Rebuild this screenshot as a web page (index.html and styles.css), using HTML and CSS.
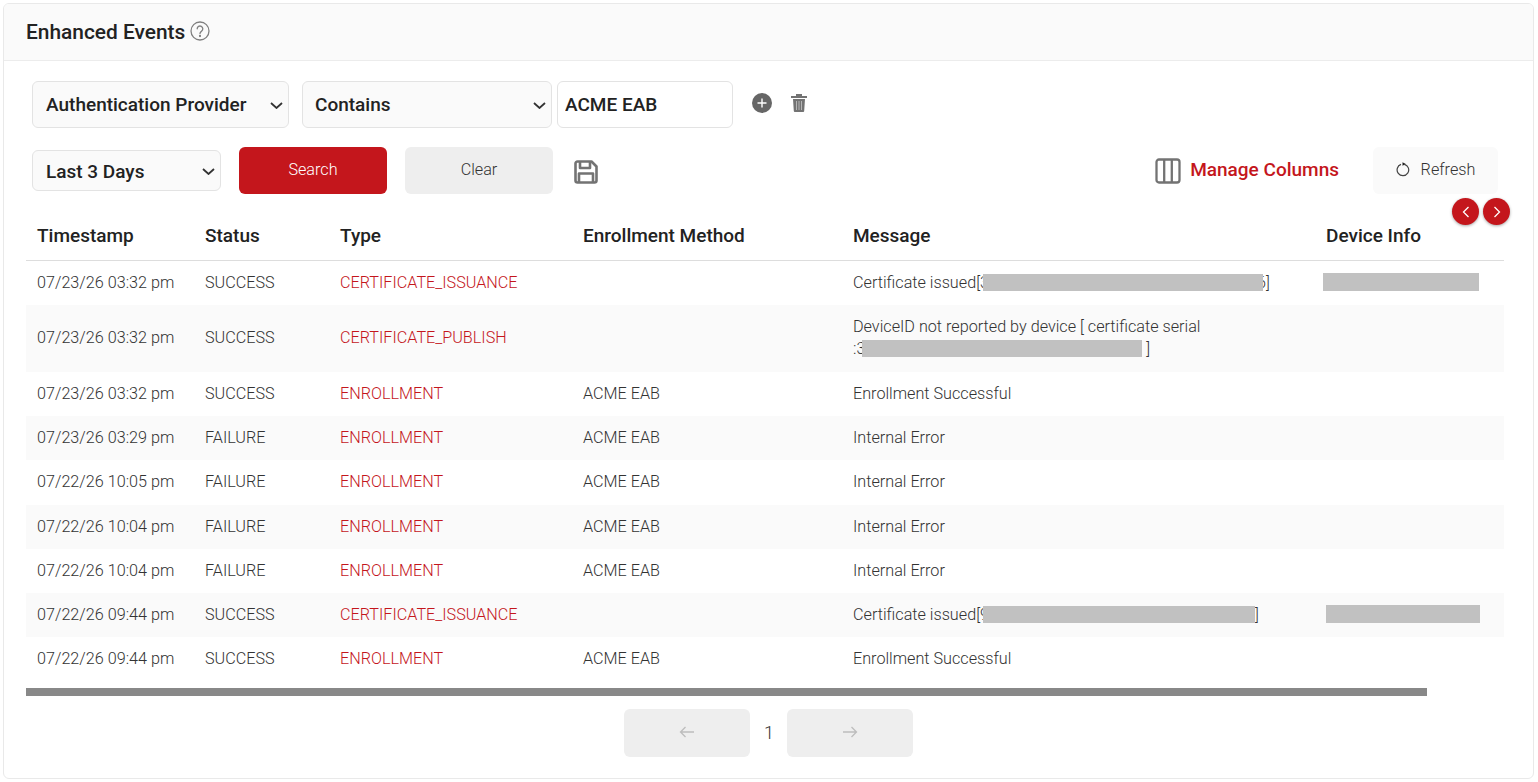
FILE: index.html

```html
<!DOCTYPE html>
<html lang="en">
<head>
    <meta charset="UTF-8">
    <meta name="viewport" content="width=device-width, initial-scale=1.0">
    <title>Enhanced Events</title>
    <link rel="stylesheet" href="styles.css">
</head>
<body>
    <div class="card">
        <div class="card-header">
            <h1 class="card-title">Enhanced Events</h1>
            <svg class="help-icon" viewBox="0 0 20 20" fill="none" stroke="#808080" stroke-width="1.3" stroke-linecap="round">
                <circle cx="10" cy="10" r="9"/>
                <path d="M7.2 7.8a2.8 2.8 0 1 1 4.4 2.3c-1 .7-1.6 1.2-1.6 2.4"/>
                <circle cx="10" cy="15" r=".5" fill="#808080"/>
            </svg>
        </div>

        <div class="card-body">
            <div class="filter-row">
                <div class="select-wrap wrap-provider">
                    <select class="field"><option>Authentication Provider</option></select>
                    <svg class="chevron" viewBox="0 0 13 7" fill="none" stroke="#333" stroke-width="1.800"><path d="M1 1l5.500 5L12 1"/></svg>
                </div>
                <div class="select-wrap wrap-operator">
                    <select class="field"><option>Contains</option></select>
                    <svg class="chevron" viewBox="0 0 13 7" fill="none" stroke="#333" stroke-width="1.800"><path d="M1 1l5.500 5L12 1"/></svg>
                </div>
                <input class="field field-value" type="text" value="ACME EAB">
                <svg class="icon-add" viewBox="0 0 20 20">
                    <circle cx="10" cy="10" r="10" fill="#666"/>
                    <path d="M10 5.5v9M5.5 10h9" stroke="#fff" stroke-width="1.4"/>
                </svg>
                <svg class="icon-trash" viewBox="0 0 16 18">
                    <path d="M5 0h6v2h5v2H0V2h5z" fill="#737373"/>
                    <path d="M2 5h12l-.8 12a1 1 0 0 1-1 1H3.800a1 1 0 0 1-1-1z" fill="#737373"/>
                    <path d="M5.500 7v9M8 7v9M10.500 7v9" stroke="#b5b5b5" stroke-width="1"/>
                </svg>
            </div>

            <div class="action-row">
                <div class="select-wrap wrap-range">
                    <select class="field"><option>Last 3 Days</option></select>
                    <svg class="chevron" viewBox="0 0 13 7" fill="none" stroke="#333" stroke-width="1.800"><path d="M1 1l5.500 5L12 1"/></svg>
                </div>
                <button class="btn btn-search">Search</button>
                <button class="btn btn-clear">Clear</button>
                <svg class="icon-save" viewBox="0 0 26 26" fill="none" stroke="#737373" stroke-width="2.6" stroke-linejoin="round">
                    <path d="M2.500 4.500a2 2 0 0 1 2-2h14l5 5v14a2 2 0 0 1-2 2h-17a2 2 0 0 1-2-2z"/>
                    <path d="M7 2.500v6.500h10V2.500M6 23.500v-9h14v9"/>
                </svg>
                <div class="action-right">
                    <svg class="icon-columns" viewBox="0 0 26 26" fill="none" stroke="#737373" stroke-width="2.300">
                        <rect x="1.500" y="1.500" width="23" height="23" rx="2.500"/>
                        <path d="M9.200 1.500v23M16.800 1.500v23"/>
                    </svg>
                    <span class="manage-link">Manage Columns</span>
                    <button class="btn btn-refresh">
                        <svg class="icon-refresh" viewBox="0 0 14 15" fill="none" stroke="#444" stroke-width="1.200">
                            <path d="M5 2.400a5.800 5.800 0 1 0 3.500 -.1"/>
                            <path d="M6.500 .2L9.800 2 6.500 3.800z" fill="#222" stroke="none"/>
                        </svg>
                        Refresh
                    </button>
                </div>
            </div>

            <div class="table-area">
                <div class="scroll-btns">
                    <button class="round-btn">
                        <svg viewBox="0 0 10 14" fill="none" stroke="#fff" stroke-width="1.300"><path d="M7.500 2L2.500 7l5 5"/></svg>
                    </button>
                    <button class="round-btn">
                        <svg viewBox="0 0 10 14" fill="none" stroke="#fff" stroke-width="1.300"><path d="M2.500 2l5 5-5 5"/></svg>
                    </button>
                </div>
                <div class="table-scroll">
                    <table class="events">
                        <colgroup>
                            <col class="col-time"><col class="col-status"><col class="col-type">
                            <col class="col-method"><col class="col-message"><col class="col-device">
                        </colgroup>
                        <thead>
                            <tr><th>Timestamp</th><th>Status</th><th>Type</th><th>Enrollment Method</th><th>Message</th><th>Device Info</th></tr>
                        </thead>
                        <tbody>
                            <tr>
                                <td>07/23/26 03:32 pm</td><td>SUCCESS</td><td class="type">CERTIFICATE_ISSUANCE</td><td></td>
                                <td>Certificate issued[3<span class="redact redact-a"></span>6]</td>
                                <td><span class="redact redact-dev1"></span></td>
                            </tr>
                            <tr class="tall">
                                <td>07/23/26 03:32 pm</td><td>SUCCESS</td><td class="type">CERTIFICATE_PUBLISH</td><td></td>
                                <td>DeviceID not reported by device [ certificate serial<br>:3<span class="redact redact-b"></span> ]</td>
                                <td></td>
                            </tr>
                            <tr>
                                <td>07/23/26 03:32 pm</td><td>SUCCESS</td><td class="type">ENROLLMENT</td><td>ACME EAB</td>
                                <td>Enrollment Successful</td><td></td>
                            </tr>
                            <tr>
                                <td>07/23/26 03:29 pm</td><td>FAILURE</td><td class="type">ENROLLMENT</td><td>ACME EAB</td>
                                <td>Internal Error</td><td></td>
                            </tr>
                            <tr>
                                <td>07/22/26 10:05 pm</td><td>FAILURE</td><td class="type">ENROLLMENT</td><td>ACME EAB</td>
                                <td>Internal Error</td><td></td>
                            </tr>
                            <tr>
                                <td>07/22/26 10:04 pm</td><td>FAILURE</td><td class="type">ENROLLMENT</td><td>ACME EAB</td>
                                <td>Internal Error</td><td></td>
                            </tr>
                            <tr>
                                <td>07/22/26 10:04 pm</td><td>FAILURE</td><td class="type">ENROLLMENT</td><td>ACME EAB</td>
                                <td>Internal Error</td><td></td>
                            </tr>
                            <tr>
                                <td>07/22/26 09:44 pm</td><td>SUCCESS</td><td class="type">CERTIFICATE_ISSUANCE</td><td></td>
                                <td>Certificate issued[9<span class="redact redact-c"></span>]</td>
                                <td><span class="redact redact-dev2"></span></td>
                            </tr>
                            <tr>
                                <td>07/22/26 09:44 pm</td><td>SUCCESS</td><td class="type">ENROLLMENT</td><td>ACME EAB</td>
                                <td>Enrollment Successful</td><td></td>
                            </tr>
                        </tbody>
                    </table>
                </div>
                <div class="scroll-track"><div class="scroll-thumb"></div></div>
            </div>

            <div class="pager">
                <button class="btn btn-page">
                    <svg viewBox="0 0 16 12" fill="none" stroke="#bdbdbd" stroke-width="1.300"><path d="M15 6H1.500M6.500 1l-5 5 5 5"/></svg>
                </button>
                <span class="page-num">1</span>
                <button class="btn btn-page">
                    <svg viewBox="0 0 16 12" fill="none" stroke="#bdbdbd" stroke-width="1.300"><path d="M1 6h13.500M9.500 1l5 5-5 5"/></svg>
                </button>
            </div>
        </div>
    </div>
</body>
</html>
```

FILE: styles.css

```css
* {
    box-sizing: border-box;
}
body {
    margin: 0;
    background-color: #fff;
    font-family: Roboto, "Liberation Sans", sans-serif;
    font-weight: 300;
    font-size: 16.2px;
    color: #333;
    overflow: hidden;
}
button {
    font-family: inherit;
    cursor: pointer;
}

.card {
    margin: 3px 4px 0 3px;
    height: 776px;
    border: 1px solid #e9e9e9;
    border-radius: 6px;
    overflow: hidden;
}
.card-header {
    display: flex;
    align-items: center;
    gap: 5px;
    height: 57px;
    padding: 0 22px;
    background-color: #fafafa;
    border-bottom: 1px solid #ececec;
}
.card-title {
    margin: 0;
    font-size: 20.900px;
    font-weight: 500;
    color: #222;
}
.help-icon {
    width: 20px;
    height: 20px;
    margin-top: -3px;
}
.card-body {
    padding: 20px 29px 0 22px;
}

.filter-row {
    display: flex;
    align-items: center;
    padding-left: 6px;
    height: 47px;
}
.action-row {
    display: flex;
    align-items: center;
    padding-left: 6px;
    margin-top: 19px;
    height: 47px;
}
.field {
    font-family: inherit;
    font-size: 19px;
    font-weight: 500;
    color: #222;
    background-color: #fafafa;
    border: 1px solid #e3e3e3;
    border-radius: 6px;
    padding: 0 12px;
}
.select-wrap {
    position: relative;
    height: 47px;
}
.select-wrap select {
    appearance: none;
    width: 100%;
    height: 100%;
}
.chevron {
    position: absolute;
    top: 50%;
    right: 6px;
    width: 13px;
    height: 7px;
    margin-top: -3px;
    pointer-events: none;
}
.wrap-provider { width: 257px; }
.wrap-provider select { padding-left: 13px; }
.wrap-operator { width: 250px; margin-left: 13px; }
.wrap-range { width: 189px; height: 41px; }
.wrap-range select { padding: 2px 0 0 13px; }
.field-value {
    width: 176px;
    height: 47px;
    margin-left: 5px;
    padding: 0 7px;
    background-color: #fff;
}

.icon-add {
    width: 20px;
    height: 20px;
    margin-left: 19px;
    margin-bottom: 3px;
}
.icon-trash {
    width: 16px;
    height: 18px;
    margin-left: 19px;
    margin-bottom: 4px;
}
.icon-save {
    width: 26px;
    height: 26px;
    margin-left: 20px;
    margin-top: 2px;
}

.btn {
    height: 47px;
    width: 148px;
    padding: 0 0 2px;
    border: none;
    border-radius: 6px;
    font-size: 16.2px;
    font-weight: 300;
}
.btn-search {
    margin-left: 18px;
    background-color: #c4161c;
    color: #fff;
}
.btn-clear {
    margin-left: 18px;
    background-color: #eee;
    color: #333;
}

.action-right {
    display: flex;
    align-items: center;
    margin-left: auto;
    margin-right: 6px;
}
.icon-columns {
    width: 26px;
    height: 26px;
}
.manage-link {
    margin-left: 9px;
    margin-bottom: 2px;
    font-size: 19px;
    font-weight: 500;
    color: #c4161c;
}
.btn-refresh {
    display: flex;
    align-items: center;
    justify-content: center;
    gap: 11px;
    width: 125px;
    margin-left: 34px;
    background-color: #fafafa;
    color: #333;
}
.icon-refresh {
    width: 14px;
    height: 15px;
}

.table-area {
    position: relative;
    margin-top: 18px;
}
.scroll-btns {
    position: absolute;
    top: -14px;
    right: -6px;
    display: flex;
    gap: 4px;
    z-index: 1;
}
.round-btn {
    display: flex;
    align-items: center;
    justify-content: center;
    width: 27px;
    height: 27px;
    padding: 0;
    border: none;
    border-radius: 50%;
    background-color: #c4161c;
    box-shadow: 0 1px 3px rgba(0, 0, 0, 0.35);
}
.round-btn svg {
    width: 10px;
    height: 14px;
}
.table-scroll {
    overflow-x: hidden;
}
.scroll-track {
    margin-top: 6px;
    height: 8px;
}
.scroll-thumb {
    width: 1401px;
    height: 8px;
    background-color: #888;
}

.events {
    width: 1559px;
    table-layout: fixed;
    border-collapse: collapse;
}
.col-time { width: 168px; }
.col-status { width: 135px; }
.col-type { width: 243px; }
.col-method { width: 270px; }
.col-message { width: 473px; }
.col-device { width: 270px; }

.events th {
    height: 48.500px;
    padding: 0 11px 2px;
    text-align: left;
    font-size: 19px;
    font-weight: 500;
    color: #222;
    border-bottom: 1px solid #ddd;
}
.events td {
    height: 44.250px;
    padding: 0 11px;
    line-height: 22px;
    vertical-align: middle;
}
.events tbody tr:nth-child(even) {
    background-color: #fafafa;
}
.events tbody tr.tall td {
    height: 67px;
}
.type {
    color: #c4161c;
}

/* blocks sit over the first and last characters of the masked serial */
.redact {
    position: relative;
    display: inline-block;
    height: 17px;
    background-color: #c1c1c1;
    vertical-align: -3px;
}
.redact-a { width: 280px; margin: 0 -6px 0 -6px; }
.redact-b { width: 280px; margin-left: -3px; }
.redact-c { width: 272px; margin: 0 0 0 -6px; }
.redact-dev1 { width: 156px; height: 18px; margin-left: -3px; }
.redact-dev2 { width: 154px; height: 18px; }

.pager {
    display: flex;
    justify-content: center;
    align-items: center;
    gap: 14px;
    margin-top: 13px;
    padding-left: 7px;
}
.btn-page {
    width: 126px;
    height: 48px;
    padding: 0;
    background-color: #eee;
}
.btn-page svg {
    width: 16px;
    height: 12px;
}
.page-num {
    font-size: 18px;
    width: 9px;
    text-align: center;
}
```
